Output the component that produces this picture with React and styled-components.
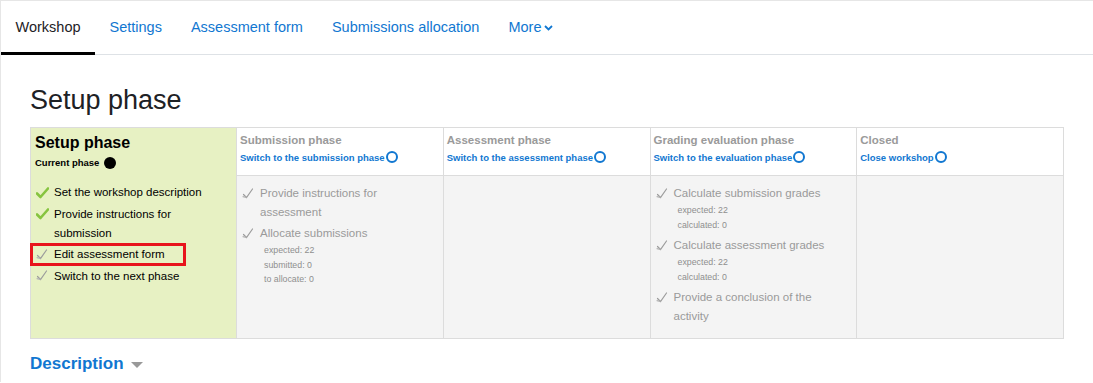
import React from "react";
import styled, { createGlobalStyle } from "styled-components";

const GlobalStyle = createGlobalStyle`
  html, body {
    margin: 0;
    padding: 0;
    background: #fff;
  }
  body {
    font-family: "Liberation Sans", Arial, sans-serif;
    color: #1d2125;
  }
`;

const Page = styled.div`
  border-top: 1px solid #e6e6e6;
  border-left: 1px solid #e6e6e6;
  min-height: 382px;
  box-sizing: border-box;
`;

const Nav = styled.nav`
  display: flex;
  height: 54px;
  box-sizing: border-box;
  border-bottom: 1px solid #dee2e6;
`;

const Tab = styled.a`
  display: flex;
  align-items: center;
  gap: 3px;
  padding: 1px 14.5px 0;
  font-size: 14.5px;
  color: ${(p) => (p.$active ? "#1d2125" : "#1177d1")};
  text-decoration: none;
  box-sizing: border-box;
  border-bottom: 3px solid ${(p) => (p.$active ? "#000" : "transparent")};
  margin-bottom: -1px;
`;

const Main = styled.main`
  padding: 0 29px 0 29px;
`;

const Heading = styled.h2`
  margin: 29px 0 11px;
  font-size: 27px;
  line-height: 32px;
  font-weight: 400;
  color: #1d2125;
`;

const Plan = styled.div`
  display: grid;
  grid-template-columns: 205px repeat(4, 1fr);
  border: 1px solid #dcdcdc;
  box-sizing: border-box;
`;

const SetupCol = styled.div`
  background: #e7f1c3;
  padding: 5px 5px 0 4px;
`;

const SetupTitle = styled.div`
  font-size: 16px;
  font-weight: 700;
  line-height: 20px;
  color: #000;
`;

const CurrentPhase = styled.div`
  display: flex;
  align-items: center;
  gap: 5px;
  margin-top: 3px;
  font-size: 9.5px;
  font-weight: 700;
  line-height: 14px;
  color: #000;
`;

const Dot = styled.span`
  width: 12px;
  height: 12px;
  border-radius: 50%;
  background: #000;
`;

const PhaseCol = styled.div`
  display: flex;
  flex-direction: column;
  border-left: 1px solid #dcdcdc;
`;

const PhaseHead = styled.div`
  height: 48px;
  box-sizing: border-box;
  padding: 4px 3px 0 3px;
  background: #fff;
  border-bottom: 1px solid #dcdcdc;
`;

const PhaseName = styled.div`
  font-size: 11.5px;
  font-weight: 700;
  line-height: 17px;
  color: #9a9a9a;
`;

const SwitchLink = styled.a`
  display: flex;
  width: fit-content;
  align-items: center;
  gap: 1px;
  margin-top: 2px;
  font-size: 9.5px;
  font-weight: 700;
  line-height: 14px;
  color: #1177d1;
  text-decoration: none;
`;

const Ring = styled.span`
  width: 8px;
  height: 8px;
  border-radius: 50%;
  border: 2px solid #1177d1;
  margin-top: -2px;
`;

const PhaseBody = styled.div`
  flex: 1;
  background: #f4f4f4;
  padding: 8px 5px 10px 4px;
`;

const Tasks = styled.ul`
  list-style: none;
  margin: ${(p) => (p.$setup ? "13px 0 0" : "0")};
  padding: 0;
`;

const Task = styled.li`
  position: relative;
  display: flex;
  align-items: flex-start;
  margin-bottom: ${(p) => (p.$setup ? "2.5px" : "2px")};
  padding-right: 12px;
  font-size: 11.5px;
  line-height: 19px;
  color: ${(p) => (p.$setup ? "#000" : "#9a9a9a")};

  ${(p) =>
    p.$marked &&
    `
    &::after {
      content: "";
      position: absolute;
      left: -5px;
      top: -2px;
      width: 156px;
      height: 23px;
      box-sizing: border-box;
      border: 3px solid #e8141c;
    }
  `}
`;

const TaskIcon = styled.span`
  flex: 0 0 19px;
  height: 19px;
  display: flex;
  align-items: center;
  padding-left: 1px;
  box-sizing: border-box;
`;

const TaskText = styled.div`
  flex: 1;
`;

const Details = styled.div`
  padding-bottom: 2px;
  margin-left: 4px;
  font-size: 8.8px;
  line-height: 14.5px;
  color: #8f8f8f;
`;

const Description = styled.h3`
  display: flex;
  align-items: center;
  gap: 7px;
  margin: 15px 0 0;
  font-size: 17px;
  font-weight: 700;
  line-height: 20px;
  color: #1177d1;
`;

const Caret = styled.span`
  width: 0;
  height: 0;
  border-left: 6px solid transparent;
  border-right: 6px solid transparent;
  border-top: 6px solid #999;
  margin-top: 2px;
`;

function Chevron() {
  return (
    <svg width="9" height="6" viewBox="0 0 9 6" style={{ marginTop: 2 }}>
      <polyline points="1,1 4.5,4.5 8,1" fill="none" stroke="#1177d1" strokeWidth="1.8" />
    </svg>
  );
}

function Check({ done }) {
  if (done) {
    return (
      <svg width="13" height="12" viewBox="0 0 13 12">
        <path d="M1 6.5 L4.5 10 L12 1.5" fill="none" stroke="#86c43f" strokeWidth="2.6" strokeLinecap="round" strokeLinejoin="round" />
      </svg>
    );
  }
  return (
    <svg width="12" height="12" viewBox="0 0 12 12">
      <path d="M1.5 6.5 L4.5 9.5 L10.5 1" fill="none" stroke="#9c9c9c" strokeWidth="1.2" strokeLinecap="round" />
      <path d="M1 8.6 L4 9.4" fill="none" stroke="#b5b5b5" strokeWidth="1.1" strokeLinecap="round" />
    </svg>
  );
}

const setupTasks = [
  { text: "Set the workshop description", done: true },
  { text: "Provide instructions for submission", done: true },
  { text: "Edit assessment form", marked: true },
  { text: "Switch to the next phase" },
];

const phases = [
  {
    name: "Submission phase",
    link: "Switch to the submission phase",
    tasks: [
      { text: "Provide instructions for assessment" },
      { text: "Allocate submissions", details: ["expected: 22", "submitted: 0", "to allocate: 0"] },
    ],
  },
  {
    name: "Assessment phase",
    link: "Switch to the assessment phase",
    tasks: [],
  },
  {
    name: "Grading evaluation phase",
    link: "Switch to the evaluation phase",
    tasks: [
      { text: "Calculate submission grades", details: ["expected: 22", "calculated: 0"] },
      { text: "Calculate assessment grades", details: ["expected: 22", "calculated: 0"] },
      { text: "Provide a conclusion of the activity" },
    ],
  },
  {
    name: "Closed",
    link: "Close workshop",
    tasks: [],
  },
];

export default function App() {
  return (
    <Page>
      <GlobalStyle />
      <Nav>
        <Tab $active>Workshop</Tab>
        <Tab>Settings</Tab>
        <Tab>Assessment form</Tab>
        <Tab>Submissions allocation</Tab>
        <Tab>
          More
          <Chevron />
        </Tab>
      </Nav>
      <Main>
        <Heading>Setup phase</Heading>
        <Plan>
          <SetupCol>
            <SetupTitle>Setup phase</SetupTitle>
            <CurrentPhase>
              Current phase
              <Dot />
            </CurrentPhase>
            <Tasks $setup>
              {setupTasks.map((t) => (
                <Task key={t.text} $setup $marked={t.marked}>
                  <TaskIcon>
                    <Check done={t.done} />
                  </TaskIcon>
                  <TaskText>{t.text}</TaskText>
                </Task>
              ))}
            </Tasks>
          </SetupCol>
          {phases.map((ph) => (
            <PhaseCol key={ph.name}>
              <PhaseHead>
                <PhaseName>{ph.name}</PhaseName>
                <SwitchLink>
                  {ph.link}
                  <Ring />
                </SwitchLink>
              </PhaseHead>
              <PhaseBody>
                <Tasks>
                  {ph.tasks.map((t) => (
                    <Task key={t.text}>
                      <TaskIcon>
                        <Check />
                      </TaskIcon>
                      <TaskText>
                        {t.text}
                        {t.details && (
                          <Details>
                            {t.details.map((d) => (
                              <div key={d}>{d}</div>
                            ))}
                          </Details>
                        )}
                      </TaskText>
                    </Task>
                  ))}
                </Tasks>
              </PhaseBody>
            </PhaseCol>
          ))}
        </Plan>
        <Description>
          Description
          <Caret />
        </Description>
      </Main>
    </Page>
  );
}
